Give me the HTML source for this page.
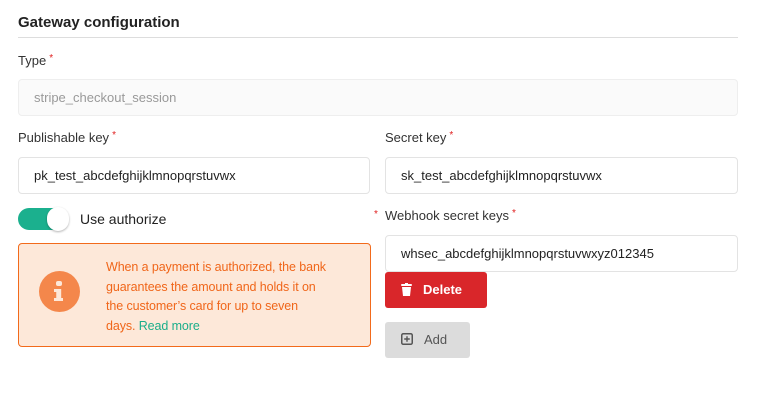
<!DOCTYPE html>
<html><head><style>
*{box-sizing:border-box;margin:0;padding:0}
body{width:761px;height:401px;background:#fff;font-family:"Liberation Sans",sans-serif;color:#333;position:relative;overflow:hidden}
.a{position:absolute}
.lbl{font-size:13px;color:#333}
.st{color:#e02020;font-size:10px;vertical-align:top;margin-left:3px}
.inp{position:absolute;height:37px;border:1px solid #e3e3e3;border-radius:4px;background:#fff;font-size:13px;color:#222;padding-left:15px;line-height:35px}
</style></head><body>
<div class="a" style="left:18px;top:14px;font-size:15px;font-weight:bold;color:#222">Gateway configuration</div>
<div class="a" style="left:18px;top:37px;width:720px;height:1px;background:#ddd"></div>
<div class="a lbl" style="left:18px;top:53px">Type<span class="st">*</span></div>
<div class="inp" style="left:18px;top:79px;width:720px;background:#fafafa;color:#999;border-color:#eee">stripe_checkout_session</div>
<div class="a lbl" style="left:18px;top:130px">Publishable key<span class="st">*</span></div>
<div class="inp" style="left:18px;top:157px;width:352px">pk_test_abcdefghijklmnopqrstuvwx</div>
<div class="a lbl" style="left:385px;top:130px">Secret key<span class="st">*</span></div>
<div class="inp" style="left:385px;top:157px;width:353px">sk_test_abcdefghijklmnopqrstuvwx</div>
<div class="a" style="left:18px;top:208px;width:50px;height:22px;border-radius:11px;background:#1bb08e"></div>
<div class="a" style="left:47px;top:207px;width:22px;height:24px;border-radius:12px;background:#fff;box-shadow:0 1px 2px rgba(0,0,0,.3)"></div>
<div class="a" style="left:80px;top:211px;font-size:14px;color:#222">Use authorize</div>
<div class="a" style="left:18px;top:243px;width:353px;height:104px;background:#fde8d9;border:1px solid #f26a1b;border-radius:4px"></div>
<div class="a" style="left:39px;top:271px;width:41px;height:41px;border-radius:50%;background:#f4874b"></div>
<div class="a" style="left:56px;top:281px;width:6px;height:5px;border-radius:2px;background:#fde8d9"></div>
<div class="a" style="left:54px;top:289px;width:9px;height:12px;background:#fde8d9;clip-path:polygon(0 0,80% 0,80% 75%,100% 75%,100% 100%,0 100%,0 75%,25% 75%,25% 25%,0 25%)"></div>
<div class="a" style="left:106px;top:258px;white-space:nowrap;font-size:12.5px;letter-spacing:-0.1px;line-height:19.5px;color:#f0661a">When a payment is authorized, the bank<br>guarantees the amount and holds it on<br>the customer’s card for up to seven<br>days. <span style="color:#1bae8a">Read more</span></div>
<div class="a" style="left:374px;top:209px;color:#e02020;font-size:10px">*</div>
<div class="a lbl" style="left:385px;top:208px">Webhook secret keys<span class="st">*</span></div>
<div class="inp" style="left:385px;top:235px;width:353px">whsec_abcdefghijklmnopqrstuvwxyz012345</div>
<div class="a" style="left:385px;top:272px;width:102px;height:36px;background:#d9262a;border-radius:3px;color:#fff;font-weight:bold;font-size:13px;line-height:36px;padding-left:38px">Delete</div>
<svg class="a" style="left:401px;top:283px" width="11" height="13" viewBox="0 0 11 13"><rect x="0" y="1" width="11" height="2" rx="1" fill="#fff"/><rect x="4" y="0" width="3" height="2" fill="#fff"/><path d="M1 4h9l-1 9H2z" fill="#fff"/></svg>
<div class="a" style="left:385px;top:322px;width:85px;height:36px;background:#dcdcdc;border-radius:3px;color:#555;font-size:13px;line-height:36px;padding-left:39px">Add</div>
<svg class="a" style="left:401px;top:333px" width="12" height="12" viewBox="0 0 12 12"><rect x="0.75" y="0.75" width="10.5" height="10.5" rx="1.5" fill="none" stroke="#555" stroke-width="1.5"/><path d="M6 3.2v5.6M3.2 6h5.6" stroke="#555" stroke-width="1.4"/></svg>
</body></html>
